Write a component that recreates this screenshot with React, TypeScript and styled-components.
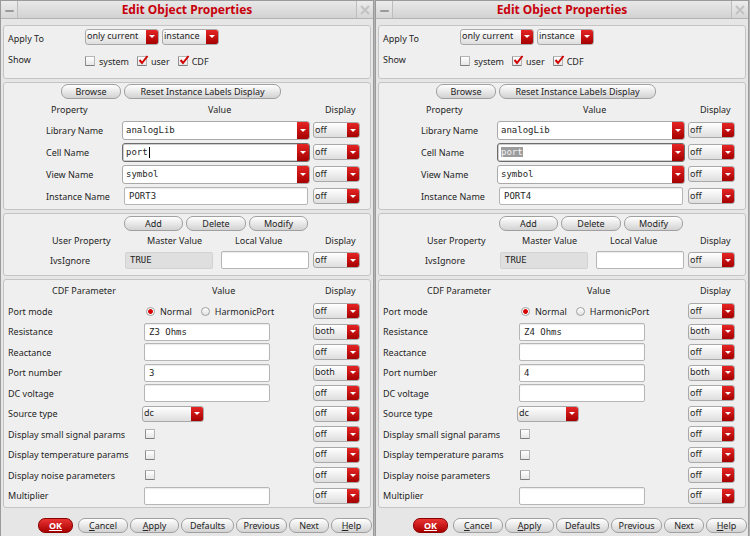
import React from 'react';
import styled, { createGlobalStyle, css } from 'styled-components';

const SANS = '"Noto Sans", "DejaVu Sans", sans-serif';
const MONO = '"DejaVu Sans Mono", "Liberation Mono", monospace';

const GlobalStyle = createGlobalStyle`
  html, body { margin: 0; padding: 0; }
  body {
    background: #b4b4b4;
    font-family: ${SANS};
    font-size: 9px;
    color: #1f1f1f;
  }
  *, *::before, *::after { box-sizing: border-box; }
`;

const Page = styled.div`
  display: flex;
  gap: 1px;
  width: 750px;
  height: 536px;
`;

const Window = styled.div`
  width: 374px;
  height: 536px;
  display: flex;
  flex-direction: column;
  border: 1px solid #9a9a9a;
  border-bottom: none;
  background: #e6e6e6;
`;

const TitleBar = styled.header`
  height: 18px;
  flex: none;
  display: grid;
  grid-template-columns: 17px 1fr 17px;
  background: linear-gradient(#e8e8e8, #d2d2d2);
  border-bottom: 1px solid #b3b3b3;
`;

const TitleButton = styled.span<{ $side: 'left' | 'right' }>`
  display: flex;
  align-items: center;
  justify-content: center;
  ${p => (p.$side === 'left' ? 'border-right' : 'border-left')}: 1px solid #bdbdbd;
  background: linear-gradient(#ececec, #d6d6d6);
`;

const Dash = styled.span`
  width: 9px;
  height: 2px;
  margin-top: 3px;
  background: #9a9a9a;
  border-radius: 1px;
`;

const Title = styled.h1`
  margin: 0;
  text-align: center;
  font-family: ${SANS};
  font-size: 12px;
  font-weight: 700;
  line-height: 17px;
  color: #c8000b;
`;

const Body = styled.div`
  flex: 1;
  display: flex;
  flex-direction: column;
  gap: 3px;
  padding: 6px 2px 0;
`;

const Group = styled.section<{ $h: number; $pad: string }>`
  height: ${p => p.$h}px;
  flex: none;
  display: flex;
  flex-direction: column;
  padding: ${p => p.$pad};
  border: 1px solid #c4c4c4;
  border-radius: 3px;
  background: #efefef;
`;

const Row = styled.div<{ $cols: string; $h: number; $mt?: number }>`
  display: grid;
  grid-template-columns: ${p => p.$cols};
  height: ${p => p.$h}px;
  margin-top: ${p => p.$mt ?? 0}px;
  align-items: center;
`;

const Label = styled.span<{ $pl?: number; $dy?: number }>`
  padding-left: ${p => p.$pl ?? 0}px;
  padding-top: ${p => p.$dy ?? 0}px;
  white-space: nowrap;
`;

const ButtonRow = styled.div<{ $pl: number }>`
  display: flex;
  gap: 3px;
  padding-left: ${p => p.$pl}px;
`;

const Button = styled.button<{ $w: number; $primary?: boolean }>`
  width: ${p => p.$w}px;
  height: 15px;
  padding: 0;
  border: 1px solid #a0a0a0;
  border-radius: 7px;
  background: linear-gradient(#ffffff, #d2d2d2);
  font-family: ${SANS};
  font-size: 9px;
  line-height: 12px;
  color: #242424;
  ${p =>
    p.$primary &&
    css`
      margin-right: 3px;
      border-color: #8a0000;
      background: linear-gradient(#ea3434, #a90000);
      color: #ffffff;
      font-weight: 700;
    `}
`;

const Combo = styled.div<{ $w: number; $h?: number; $ml?: number; $edit?: boolean; $focus?: boolean }>`
  display: flex;
  width: ${p => p.$w}px;
  height: ${p => p.$h ?? 16}px;
  margin-left: ${p => p.$ml ?? 0}px;
  border: 1px solid ${p => (p.$focus ? '#6c6c6c' : '#a9a9a9')};
  border-radius: 3px;
  overflow: hidden;
  background: ${p => (p.$edit ? '#ffffff' : 'linear-gradient(#ffffff, #dedede)')};
  ${p => p.$focus && css`box-shadow: inset 0 0 0 1px #cfcfcf;`}
`;

const ComboText = styled.span<{ $mono?: boolean }>`
  flex: 1;
  display: flex;
  align-items: center;
  padding-left: ${p => (p.$mono ? 3 : 1)}px;
  padding-bottom: ${p => (p.$mono ? 0 : 2)}px;
  font-family: ${p => (p.$mono ? MONO : SANS)};
  font-size: 9px;
  white-space: nowrap;
  overflow: hidden;
`;

const ComboArrow = styled.span`
  width: 12px;
  flex: none;
  display: flex;
  align-items: center;
  justify-content: center;
  background: linear-gradient(#e62424, #a50000);
  &::after {
    content: '';
    border-left: 3px solid transparent;
    border-right: 3px solid transparent;
    border-top: 3px solid #ffffff;
  }
`;

const Field = styled.div<{ $w: number; $h?: number; $ml?: number; $ro?: boolean }>`
  display: flex;
  align-items: center;
  width: ${p => p.$w}px;
  height: ${p => p.$h ?? 18}px;
  margin-left: ${p => p.$ml ?? 0}px;
  padding-left: 4px;
  border: 1px solid ${p => (p.$ro ? '#d2d2d2' : '#b6b6b6')};
  border-radius: 2px;
  background: ${p => (p.$ro ? '#dfdfdf' : '#ffffff')};
  box-shadow: ${p => (p.$ro ? 'none' : 'inset 0 1px 1px rgba(0, 0, 0, 0.08)')};
  font-family: ${MONO};
  font-size: 9px;
  white-space: nowrap;
`;

const Caret = styled.span`
  width: 1px;
  height: 11px;
  margin-left: 1px;
  background: #000000;
`;

const Selected = styled.span`
  background: #9c9c9c;
  color: #f4f4f4;
`;

const ChecksLine = styled.div`
  display: flex;
  align-items: center;
  gap: 8px;
  padding-top: 4px;
`;

const CheckItem = styled.label`
  display: flex;
  align-items: center;
  gap: 4px;
`;

const CheckBox = styled.span<{ $ml?: number }>`
  position: relative;
  display: block;
  flex: none;
  width: 10px;
  height: 10px;
  margin-left: ${p => p.$ml ?? 0}px;
  border: 1px solid #b5b5b5;
  border-bottom-color: #7d7d7d;
  border-left-color: #8f8f8f;
  border-radius: 1px;
  background: linear-gradient(#ffffff, #e6e6e6);
`;

const CheckMark = styled.svg`
  position: absolute;
  left: 0;
  top: -3px;
  overflow: visible;
`;

const RadioLine = styled.div`
  display: flex;
  align-items: center;
  gap: 5px;
  padding-left: 2px;
`;

const RadioDot = styled.span<{ $on?: boolean }>`
  flex: none;
  width: 9px;
  height: 9px;
  border-radius: 50%;
  border: 1px solid #a0a0a0;
  background: ${p =>
    p.$on
      ? 'radial-gradient(circle, #d80000 0 2px, #ffffff 2.8px)'
      : 'linear-gradient(#ffffff, #e0e0e0)'};
`;

const RadioText = styled.span`
  margin-right: 4px;
`;

const Footer = styled.footer`
  height: 28px;
  flex: none;
  display: flex;
  justify-content: flex-end;
  gap: 2px;
  padding: 10px 1px 0 0;
`;

const Check = ({ on, ml }: { on?: boolean; ml?: number }) => (
  <CheckBox $ml={ml}>
    {on && (
      <CheckMark width="11" height="11" viewBox="0 0 11 11">
        <path d="M1.5 6 L4 9 L9.5 2" stroke="#d00000" strokeWidth="2" fill="none" />
      </CheckMark>
    )}
  </CheckBox>
);

const Select = (props: { w: number; h?: number; ml?: number; value: string }) => (
  <Combo $w={props.w} $h={props.h} $ml={props.ml}>
    <ComboText>{props.value}</ComboText>
    <ComboArrow />
  </Combo>
);

const Display = ({ value }: { value: string }) => <Select w={47} value={value} />;

const U = styled.u`
  text-decoration: underline;
`;

type Param = {
  label: string;
  kind: 'radio' | 'text' | 'select' | 'check';
  value?: string;
  display: string;
};

const Dialog = ({ n, selected }: { n: number; selected?: boolean }) => {
  const params: Param[] = [
    { label: 'Port mode', kind: 'radio', display: 'off' },
    { label: 'Resistance', kind: 'text', value: `Z${n} Ohms`, display: 'both' },
    { label: 'Reactance', kind: 'text', value: '', display: 'off' },
    { label: 'Port number', kind: 'text', value: String(n), display: 'both' },
    { label: 'DC voltage', kind: 'text', value: '', display: 'off' },
    { label: 'Source type', kind: 'select', value: 'dc', display: 'off' },
    { label: 'Display small signal params', kind: 'check', display: 'off' },
    { label: 'Display temperature params', kind: 'check', display: 'off' },
    { label: 'Display noise parameters', kind: 'check', display: 'off' },
    { label: 'Multiplier', kind: 'text', value: '', display: 'off' },
  ];

  const propCols = '118px 191px 47px';
  const userCols = '120px 96px 93px 47px';
  const cdfCols = '140px 169px 47px';

  return (
    <Window>
      <TitleBar>
        <TitleButton $side="left">
          <Dash />
        </TitleButton>
        <Title>Edit Object Properties</Title>
        <TitleButton $side="right">
          <svg width="10" height="10" viewBox="0 0 10 10">
            <path d="M1 1 L9 9 M9 1 L1 9" stroke="#c2c2c2" strokeWidth="2" />
          </svg>
        </TitleButton>
      </TitleBar>

      <Body>
        <Group $h={54} $pad="2px 0 0 0">
          <Row $cols="81px auto" $h={17}>
            <Label $pl={4} $dy={4}>Apply To</Label>
            <ButtonRow $pl={0}>
              <Select w={74} value="only current" />
              <Select w={57} value="instance" />
            </ButtonRow>
          </Row>
          <Row $cols="81px auto" $h={18} $mt={5}>
            <Label $pl={4}>Show</Label>
            <ChecksLine>
              <CheckItem>
                <Check />
                system
              </CheckItem>
              <CheckItem>
                <Check on />
                user
              </CheckItem>
              <CheckItem>
                <Check on />
                CDF
              </CheckItem>
            </ChecksLine>
          </Row>
        </Group>

        <Group $h={128} $pad="1px 0 0 0">
          <ButtonRow $pl={57}>
            <Button $w={60}>Browse</Button>
            <Button $w={157}>Reset Instance Labels Display</Button>
          </ButtonRow>
          <Row $cols={propCols} $h={20}>
            <Label $pl={47}>Property</Label>
            <Label $pl={86}>Value</Label>
            <Label $pl={12}>Display</Label>
          </Row>
          <Row $cols={propCols} $h={22}>
            <Label $pl={42}>Library Name</Label>
            <Combo $w={188} $h={19} $edit>
              <ComboText $mono>analogLib</ComboText>
              <ComboArrow />
            </Combo>
            <Display value="off" />
          </Row>
          <Row $cols={propCols} $h={22}>
            <Label $pl={42}>Cell Name</Label>
            <Combo $w={188} $h={19} $edit $focus>
              <ComboText $mono>
                {selected ? (
                  <Selected>port</Selected>
                ) : (
                  <>
                    port
                    <Caret />
                  </>
                )}
              </ComboText>
              <ComboArrow />
            </Combo>
            <Display value="off" />
          </Row>
          <Row $cols={propCols} $h={22}>
            <Label $pl={42}>View Name</Label>
            <Combo $w={188} $h={19} $edit>
              <ComboText $mono>symbol</ComboText>
              <ComboArrow />
            </Combo>
            <Display value="off" />
          </Row>
          <Row $cols={propCols} $h={22}>
            <Label $pl={42}>Instance Name</Label>
            <Field $w={184} $ml={2}>PORT{n}</Field>
            <Display value="off" />
          </Row>
        </Group>

        <Group $h={63} $pad="2px 0 0 0">
          <ButtonRow $pl={120}>
            <Button $w={59}>Add</Button>
            <Button $w={60}>Delete</Button>
            <Button $w={59}>Modify</Button>
          </ButtonRow>
          <Row $cols={userCols} $h={19}>
            <Label $pl={48}>User Property</Label>
            <Label $pl={23}>Master Value</Label>
            <Label $pl={15}>Local Value</Label>
            <Label $pl={12}>Display</Label>
          </Row>
          <Row $cols={userCols} $h={20}>
            <Label $pl={46}>IvsIgnore</Label>
            <Field $w={88} $h={17} $ml={1} $ro>
              TRUE
            </Field>
            <Field $w={88} $ml={1} />
            <Display value="off" />
          </Row>
        </Group>

        <Group $h={229} $pad="0">
          <Row $cols={cdfCols} $h={21}>
            <Label $pl={48}>CDF Parameter</Label>
            <Label $pl={68}>Value</Label>
            <Label $pl={12}>Display</Label>
          </Row>
          {params.map(p => (
            <Row key={p.label} $cols={cdfCols} $h={20.5}>
              <Label $pl={4}>{p.label}</Label>
              {p.kind === 'radio' && (
                <RadioLine>
                  <RadioDot $on />
                  <RadioText>Normal</RadioText>
                  <RadioDot />
                  <RadioText>HarmonicPort</RadioText>
                </RadioLine>
              )}
              {p.kind === 'text' && <Field $w={126}>{p.value}</Field>}
              {p.kind === 'select' && <Select w={62} h={16} ml={-2} value={p.value ?? ''} />}
              {p.kind === 'check' && <Check ml={1} />}
              <Display value={p.display} />
            </Row>
          ))}
        </Group>
      </Body>

      <Footer>
        <Button $w={35} $primary>
          <U>OK</U>
        </Button>
        <Button $w={50}>
          <U>C</U>ancel
        </Button>
        <Button $w={49}>
          <U>A</U>pply
        </Button>
        <Button $w={53}>Defaults</Button>
        <Button $w={51}>Previous</Button>
        <Button $w={40}>Next</Button>
        <Button $w={41}>
          <U>H</U>elp
        </Button>
      </Footer>
    </Window>
  );
};

export default function App() {
  return (
    <>
      <GlobalStyle />
      <Page>
        <Dialog n={3} />
        <Dialog n={4} selected />
      </Page>
    </>
  );
}
